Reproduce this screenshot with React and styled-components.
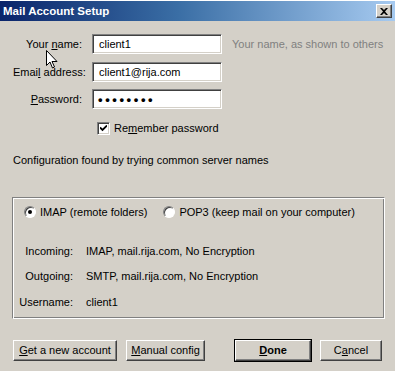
import React from "react";
import styled, { createGlobalStyle, css } from "styled-components";

const Global = createGlobalStyle`
  html, body { margin: 0; padding: 0; background: #d4d0c8; }
  body { font-family: "Liberation Sans", Arial, sans-serif; font-size: 11px; color: #000; }
`;

const Window = styled.div`
  width: 395px;
  height: 371px;
  background: #d4d0c8;
  border-top: 1px solid #ffffff;
  box-sizing: border-box;
  position: relative;
  overflow: hidden;
`;

const TitleBar = styled.div`
  height: 20px;
  display: flex;
  align-items: center;
  justify-content: space-between;
  padding: 0 3px 0 3px;
  background: linear-gradient(to right, #0a246a 0%, #3a6ea5 45%, #a6caf0 100%);
`;

const Title = styled.div`
  color: #fff;
  font-weight: bold;
  font-size: 11.5px;
`;

const CloseButton = styled.div`
  width: 16px;
  height: 14px;
  box-sizing: border-box;
  background: #d4d0c8;
  border: 1px solid;
  border-color: #fff #404040 #404040 #fff;
  box-shadow: inset -1px -1px 0 #808080;
  display: flex;
  align-items: center;
  justify-content: center;
`;

const Content = styled.div`
  padding: 13px 11px 0 13px;
`;

const FormGrid = styled.div`
  display: grid;
  grid-template-columns: 69px 130px auto;
  column-gap: 10px;
  row-gap: 7.5px;
  align-items: center;
`;

const Label = styled.div`
  text-align: right;
  white-space: nowrap;
`;

const Field = styled.div`
  height: 20px;
  box-sizing: border-box;
  background: #fff;
  border: 1px solid;
  border-color: #808080 #fff #fff #808080;
  box-shadow: inset 1px 1px 0 #404040, inset -1px -1px 0 #d4d0c8;
  padding: 0 5px 0 6px;
  display: flex;
  align-items: center;
  ${(p) => p.$secret && css`
    font-size: 13px;
    font-weight: bold;
    letter-spacing: 2.6px;
    padding-left: 5px;
  `}
`;

const Hint = styled.div`
  color: #808080;
  white-space: nowrap;
`;

const CheckRow = styled.div`
  grid-column: 2 / span 2;
  display: flex;
  align-items: center;
  gap: 4px;
  padding-left: 5px;
  margin-top: 5px;
`;

const CheckBox = styled.div`
  width: 13px;
  height: 13px;
  box-sizing: border-box;
  background: #fff;
  border: 1px solid;
  border-color: #808080 #fff #fff #808080;
  box-shadow: inset 1px 1px 0 #404040, inset -1px -1px 0 #d4d0c8;
  display: flex;
  align-items: center;
  justify-content: center;
`;

const Message = styled.div`
  margin-top: 19px;
`;

const Group = styled.div`
  margin-top: 31px;
  margin-left: -1px;
  width: 373px;
  height: 122px;
  box-sizing: border-box;
  border: 1px solid;
  border-color: #808080 #fff #fff #808080;
  box-shadow: inset 1px 1px 0 #fff, inset -1px -1px 0 #808080;
  padding: 8px 0 0 11px;
`;

const RadioRow = styled.div`
  display: flex;
  align-items: center;
  gap: 16px;
`;

const RadioOption = styled.div`
  display: flex;
  align-items: center;
  gap: 4px;
`;

const RadioCircle = styled.div`
  width: 12px;
  height: 12px;
  border-radius: 50%;
  box-sizing: border-box;
  background: #fff;
  border: 1px solid;
  border-color: #808080 #fff #fff #808080;
  box-shadow: inset 1px 1px 0 #404040;
  display: flex;
  align-items: center;
  justify-content: center;
  &::after {
    content: "";
    width: 4px;
    height: 4px;
    border-radius: 50%;
    background: ${(p) => (p.$on ? "#000" : "transparent")};
  }
`;

const InfoGrid = styled.div`
  display: grid;
  grid-template-columns: 60px auto;
  column-gap: 13px;
  row-gap: 13.5px;
  margin-top: 27px;
  margin-left: -11px;
`;

const Buttons = styled.div`
  display: flex;
  align-items: center;
  margin-top: 21px;
`;

const Button = styled.div`
  height: 21px;
  width: ${(p) => p.$w}px;
  margin-left: ${(p) => p.$ml || 0}px;
  box-sizing: border-box;
  display: flex;
  align-items: center;
  justify-content: center;
  background: #d4d0c8;
  border: 1px solid;
  border-color: #fff #404040 #404040 #fff;
  box-shadow: inset -1px -1px 0 #808080;
  white-space: nowrap;
  ${(p) => p.$default && css`
    font-weight: bold;
    outline: 1px solid #000;
    outline-offset: 0;
  `}
`;

const Cursor = styled.svg`
  position: absolute;
  left: 46px;
  top: 49px;
`;

const U = styled.span`
  text-decoration: underline;
`;

export default function App() {
  return (
    <>
      <Global />
      <Window>
        <TitleBar>
          <Title>Mail Account Setup</Title>
          <CloseButton>
            <svg width="8" height="7" viewBox="0 0 8 7">
              <path d="M0 0h2l2 2 2-2h2L5 3.5 8 7H6L4 5 2 7H0l3-3.5z" fill="#000" />
            </svg>
          </CloseButton>
        </TitleBar>
        <Content>
          <FormGrid>
            <Label>Your <U>n</U>ame:</Label>
            <Field>client1</Field>
            <Hint>Your name, as shown to others</Hint>
            <Label>Emai<U>l</U> address:</Label>
            <Field>client1@rija.com</Field>
            <div />
            <Label><U>P</U>assword:</Label>
            <Field $secret>••••••••</Field>
            <div />
            <div />
            <CheckRow>
              <CheckBox>
                <svg width="7" height="7" viewBox="0 0 7 7">
                  <path d="M0 2.5l2.5 2.5L7 0.5" stroke="#000" strokeWidth="1.8" fill="none" />
                </svg>
              </CheckBox>
              <span>Re<U>m</U>ember password</span>
            </CheckRow>
          </FormGrid>
          <Message>Configuration found by trying common server names</Message>
          <Group>
            <RadioRow>
              <RadioOption>
                <RadioCircle $on />
                <span>IMAP (remote folders)</span>
              </RadioOption>
              <RadioOption>
                <RadioCircle />
                <span>POP3 (keep mail on your computer)</span>
              </RadioOption>
            </RadioRow>
            <InfoGrid>
              <Label>Incoming:</Label>
              <div>IMAP, mail.rija.com, No Encryption</div>
              <Label>Outgoing:</Label>
              <div>SMTP, mail.rija.com, No Encryption</div>
              <Label>Username:</Label>
              <div>client1</div>
            </InfoGrid>
          </Group>
          <Buttons>
            <Button $w={104}><U>G</U>et a new account</Button>
            <Button $w={79} $ml={9}><U>M</U>anual config</Button>
            <Button $w={76} $ml={30} $default><U>D</U>one</Button>
            <Button $w={62} $ml={9}>C<U>a</U>ncel</Button>
          </Buttons>
        </Content>
        <Cursor width="12" height="19" viewBox="0 0 12 19">
          <path d="M0.5 0.5v15l3.5-3.5 2.5 6 2-1-2.5-5.5h5z" fill="#fff" stroke="#000" strokeWidth="1" />
        </Cursor>
      </Window>
    </>
  );
}
